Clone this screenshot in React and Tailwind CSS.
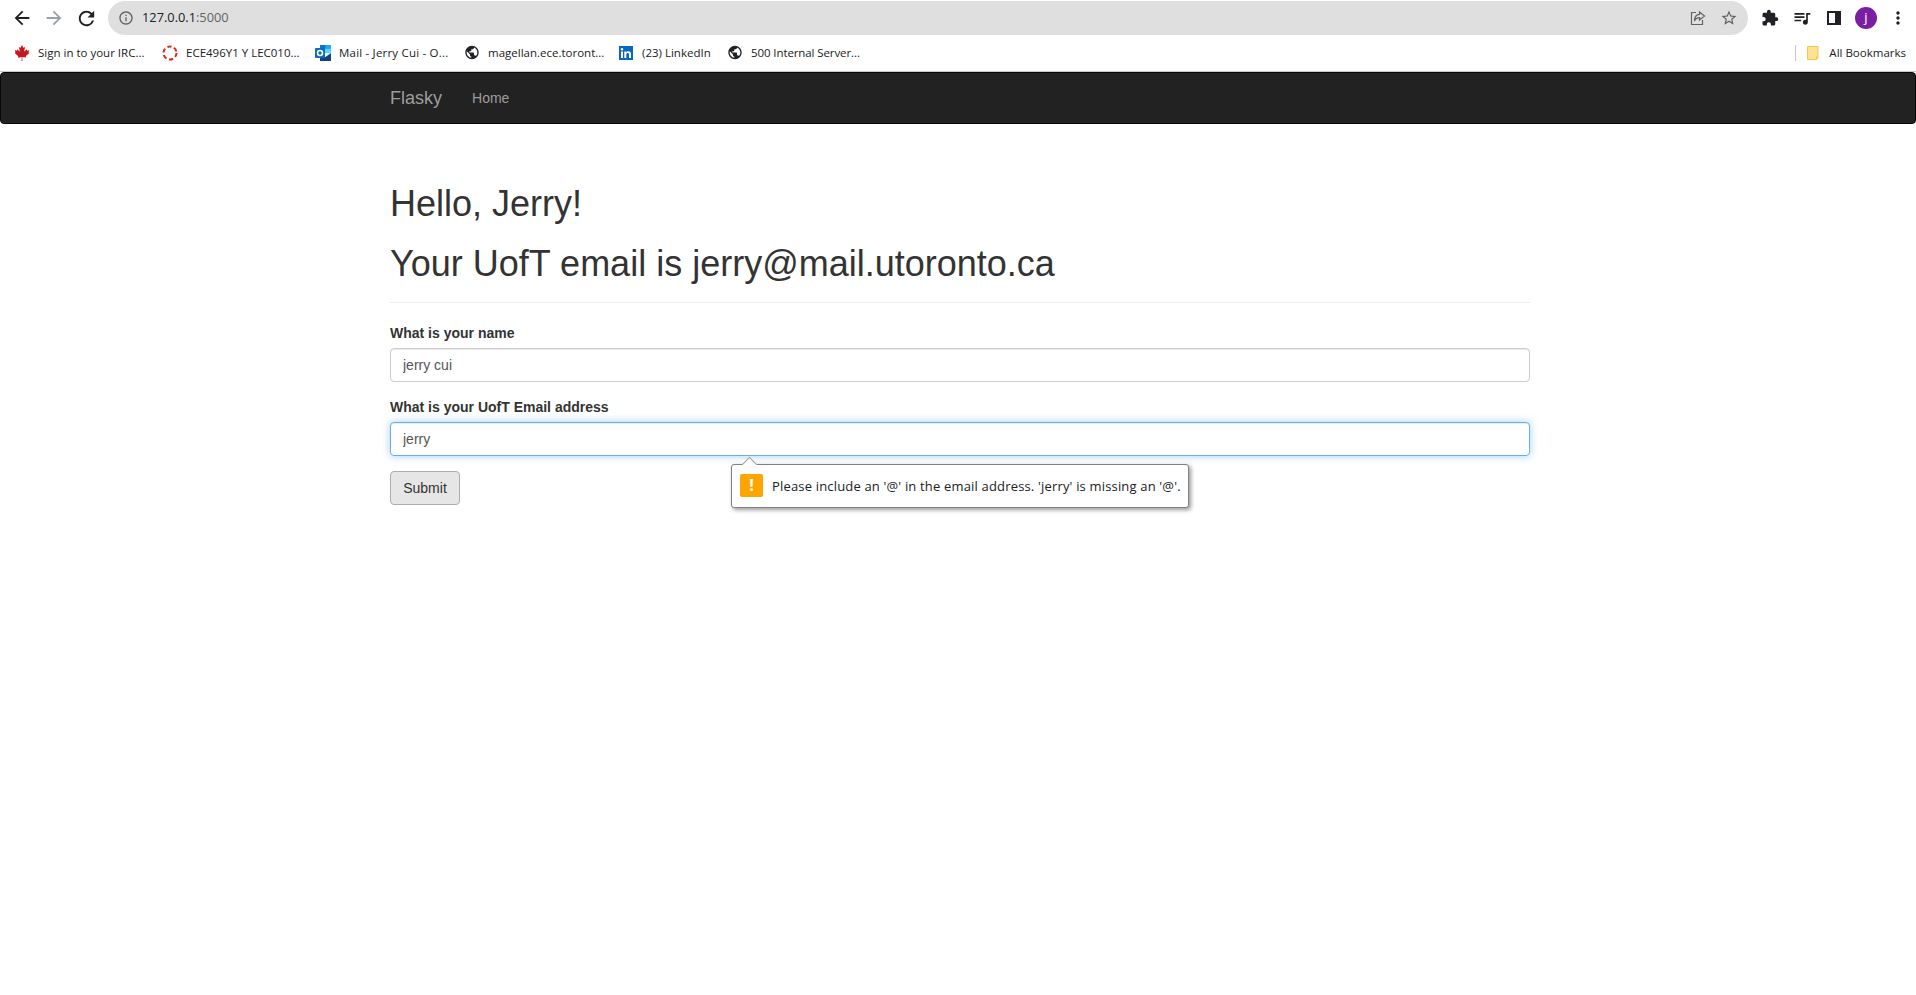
import {
  MdArrowBack,
  MdArrowForward,
  MdRefresh,
  MdInfoOutline,
  MdStarBorder,
  MdExtension,
  MdQueueMusic,
  MdMoreVert,
  MdPublic,
} from 'react-icons/md'
import { FaCanadianMapleLeaf } from 'react-icons/fa'

const ShareIcon = () => (
  <svg width="16" height="16" viewBox="0 0 16 16" fill="none" stroke="#5f6368" strokeWidth="1.2">
    <path d="M6 2.5H1.5v12h11V10" />
    <path d="M9.5 2l5 4-5 4V7.6C7 7.6 5.5 8.6 4.5 11c0-4 2-6.400 5-6.600z" />
  </svg>
)

const PanelIcon = () => (
  <svg width="14" height="14" viewBox="0 0 14 14">
    <path d="M0 0h14v14H0z M2 2v10h6V2z" fill="#202124" fillRule="evenodd" />
  </svg>
)

const DashedCircle = () => (
  <svg width="16" height="16" viewBox="0 0 16 16" fill="none">
    <circle cx="8" cy="8" r="6.500" stroke="#e1251b" strokeWidth="2" strokeDasharray="4.200 2.600" />
  </svg>
)

const OutlookIcon = () => (
  <svg width="16" height="16" viewBox="0 0 16 16">
    <path d="M5 0h11v8H5z" fill="#28a8ea" />
    <path d="M5 0h5.500v4H5z" fill="#0078d4" />
    <path d="M5 8l5.500 4L16 8v8H5z" fill="#14447d" />
    <path d="M10 4h6v4h-6z" fill="#50d9ff" />
    <rect x="0" y="3" width="10" height="10" rx="1" fill="#0f6cbd" />
    <circle cx="5" cy="8" r="2.500" fill="none" stroke="#fff" strokeWidth="1.500" />
  </svg>
)

const LinkedinIcon = () => (
  <svg width="14" height="14" viewBox="0 0 14 14">
    <rect width="14" height="14" fill="#0a66c2" />
    <path d="M2 5.500h2V12H2z M5.300 5.500h1.900v.9c.4-.6 1.100-1.100 2.100-1.100 1.900 0 2.700 1.100 2.700 3V12h-2V8.600c0-.9-.3-1.500-1.200-1.500-.9 0-1.500.6-1.500 1.500V12h-2z" fill="#fff" />
    <circle cx="3" cy="3.300" r="1.200" fill="#fff" />
  </svg>
)

const FolderIcon = () => (
  <svg width="12" height="14" viewBox="0 0 12 14">
    <path d="M.5.500h10.500v11.500l-1.500 1.500H.5z" fill="#fde293" stroke="#f2c94c" />
    <path d="M9.500 13.500V11H11" fill="none" stroke="#f2c94c" />
  </svg>
)

const bookmarks = [
  { icon: <FaCanadianMapleLeaf size={16} color="#c8161d" />, label: 'Sign in to your IRC...', ml: 'ml-[14px]', w: 'w-[107px]' },
  { icon: <DashedCircle />, label: 'ECE496Y1 Y LEC010...', ml: 'ml-[17px]', w: 'w-[112px]' },
  { icon: <OutlookIcon />, label: 'Mail - Jerry Cui - O...', ml: 'ml-[17px]', w: 'w-[108px] tracking-[0.2px]' },
  { icon: <MdPublic size={17} color="#202124" />, label: 'magellan.ece.toront...', ml: 'ml-[17px]', w: 'w-[113px]' },
  { icon: <LinkedinIcon />, label: '(23) LinkedIn', ml: 'ml-[17px]', w: 'w-[68px]' },
  { icon: <MdPublic size={17} color="#202124" />, label: '500 Internal Server...', ml: 'ml-[17px]', w: 'w-[108px] tracking-[-0.1px]' },
]

const ChromeBar = () => (
  <div className="font-['Open_Sans',sans-serif] text-[#202124]">
    <div className="flex h-[36px] items-start bg-white">
      <div className="flex h-[36px] w-[108px] items-center pl-[11px]">
        <MdArrowBack size={22} color="#202124" />
        <MdArrowForward size={22} color="#9aa0a6" className="ml-[10px]" />
        <MdRefresh size={23} color="#202124" className="ml-[10px]" />
      </div>
      <div className="mt-px flex h-[34px] flex-1 items-center rounded-full bg-[#dfdfdf] pr-[10px] pl-[10px]">
        <MdInfoOutline size={16} color="#5f6368" />
        <span className="ml-[8px] text-[12.800px] text-[#5f6368]">
          <span className="text-[#202124]">127.0.0.1</span>:5000
        </span>
        <div className="ml-auto flex items-center gap-[14px]">
          <ShareIcon />
          <MdStarBorder size={18} color="#5f6368" />
        </div>
      </div>
      <div className="flex h-[36px] w-[168px] items-center pl-[13px]">
        <MdExtension size={18} color="#202124" />
        <MdQueueMusic size={20} color="#202124" className="ml-[13px]" />
        <span className="ml-[15px]"><PanelIcon /></span>
        <div className="ml-[14px] flex h-[22px] w-[22px] items-center justify-center rounded-full bg-[#7b1fa2] text-[13px] text-white">j</div>
        <MdMoreVert size={20} color="#202124" className="ml-[11px]" />
      </div>
    </div>
    <div className="-mt-px flex h-[36px] items-center bg-white pb-px text-[11.500px]">
      {bookmarks.map((b) => (
        <div key={b.label} className={`flex items-center ${b.ml}`}>
          <span className="flex w-[16px] justify-center">{b.icon}</span>
          <span className={`ml-[8px] whitespace-nowrap ${b.w}`}>{b.label}</span>
        </div>
      ))}
      <div className="ml-auto h-[16px] w-px bg-[#c4c7c5]" />
      <div className="mr-[10px] ml-[11px] flex items-center">
        <FolderIcon />
        <span className="ml-[10px] whitespace-nowrap">All Bookmarks</span>
      </div>
    </div>
    <div className="h-px bg-[#c9c9c9]" />
  </div>
)

const App = () => {
  return (
    <div className="min-h-screen bg-white font-['Liberation_Sans',sans-serif] text-[14px] text-[#333]">
      <ChromeBar />

      <nav className="h-[52px] rounded-[4px] border border-[#080808] bg-[#222]">
        <div className="flex h-full items-center pl-[389px]">
          <span className="text-[18px] text-[#9d9d9d]">Flasky</span>
          <span className="ml-[30px] text-[14px] text-[#9d9d9d]">Home</span>
        </div>
      </nav>

      <main className="ml-[390px] w-[1140px]">
        <div className="mt-[60px] border-b border-[#eee] pb-[18px]">
          <h1 className="text-[36px] leading-[40px]">Hello, Jerry!</h1>
          <h1 className="mt-[20px] text-[36px] leading-[40px]">Your UofT email is jerry@mail.utoronto.ca</h1>
        </div>

        <form className="mt-[20px]">
          <label className="block text-[14px] leading-[20px] font-bold">What is your name</label>
          <input
            readOnly
            value="jerry cui"
            className="mt-[5px] block h-[34px] w-full rounded-[4px] border border-[#ccc] px-[12px] text-[14px] text-[#555] shadow-[inset_0_1px_1px_rgba(0,0,0,0.075)] outline-none"
          />
          <label className="mt-[15px] block text-[14px] leading-[20px] font-bold">What is your UofT Email address</label>
          <div className="relative">
            <input
              readOnly
              value="jerry"
              className="mt-[5px] block h-[34px] w-full rounded-[4px] border border-[#66afe9] px-[12px] text-[14px] text-[#555] shadow-[inset_0_1px_1px_rgba(0,0,0,0.075),0_0_8px_rgba(102,175,233,0.6)] outline-none"
            />
            {/* browser validation bubble */}
            <div className="absolute top-[42px] left-[341px] z-10 flex h-[44px] w-[458px] items-center rounded-[3px] border border-[#808080] bg-white pl-[8px] font-['Open_Sans',sans-serif] text-[13px] tracking-[0.17px] text-[#202124] shadow-[2px_2px_4px_rgba(0,0,0,0.4)]">
              <div className="absolute -top-[6px] left-[12px] h-[11px] w-[11px] rotate-45 border-t border-l border-[#a0a0a0] bg-white" />
              <div className="-mt-[2px] flex h-[23px] w-[23px] items-center justify-center rounded-[2px] bg-[#ffa500] text-[16px] leading-none font-bold text-white">!</div>
              <span className="mt-px ml-[9px] whitespace-nowrap">Please include an '@' in the email address. 'jerry' is missing an '@'.</span>
            </div>
          </div>
          <button
            type="button"
            className="mt-[15px] block h-[34px] w-[70px] rounded-[4px] border border-[#adadad] bg-[#e6e6e6] text-[14px] text-[#333]"
          >
            Submit
          </button>
        </form>
      </main>
    </div>
  )
}

export default App
